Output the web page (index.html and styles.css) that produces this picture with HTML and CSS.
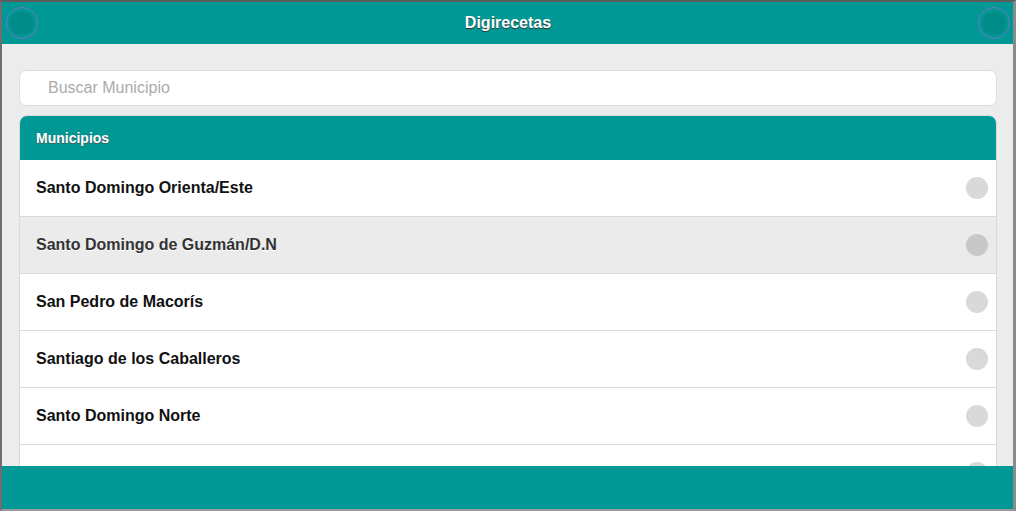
FILE: index.html
```html
<!DOCTYPE html>
<html lang="es">
<head>
    <meta charset="UTF-8">
    <meta name="viewport" content="width=device-width, initial-scale=1.0">
    <title>Digirecetas</title>
    <link rel="stylesheet" href="styles.css">
</head>
<body>
    <div class="app">
        <header class="topbar">
            <span class="round-btn"></span>
            <h1>Digirecetas</h1>
            <span class="round-btn"></span>
        </header>

        <main class="content">
            <div class="search">
                <input type="text" placeholder="Buscar Municipio">
            </div>

            <ul class="listview">
                <li class="list-divider">Municipios</li>
                <li class="list-item">Santo Domingo Orienta/Este<span class="dot"></span></li>
                <li class="list-item active">Santo Domingo de Guzmán/D.N<span class="dot"></span></li>
                <li class="list-item">San Pedro de Macorís<span class="dot"></span></li>
                <li class="list-item">Santiago de los Caballeros<span class="dot"></span></li>
                <li class="list-item">Santo Domingo Norte<span class="dot"></span></li>
                <li class="list-item"><span></span><span class="dot"></span></li>
            </ul>
        </main>

        <footer class="bottombar"></footer>
    </div>
</body>
</html>
```

FILE: styles.css
```css
* {
    margin: 0;
    padding: 0;
    box-sizing: border-box;
}
html, body {
    height: 100%;
}
body {
    font-family: "Liberation Sans", Arial, sans-serif;
    background: #7a7a7a;
    overflow: hidden;
}
.app {
    height: 100%;
    display: flex;
    flex-direction: column;
    border-top: 2px solid #5c5c5c;
    border-left: 2px solid #6e6e6e;
    border-right: 3px solid #8a8a8a;
    border-bottom: 2px solid #9a9a9a;
    background: #ececec;
}
.topbar {
    height: 42px;
    flex-shrink: 0;
    background: #009894;
    display: flex;
    align-items: center;
    justify-content: space-between;
    padding: 0 3px 0 4px;
}
.topbar h1 {
    color: #fff;
    font-size: 16px;
    font-weight: bold;
    text-shadow: 0 1px 1px #333;
}
.round-btn {
    width: 32px;
    height: 32px;
    border-radius: 50%;
    border: 1px solid #6f79c4;
    background: #008c88;
    box-shadow: inset 0 0 0 3px #009894;
}
.content {
    flex: 1;
    overflow: hidden;
    padding: 26px 16px 0 17px;
}
.search {
    background: #fff;
    border: 1px solid #dcdcdc;
    border-radius: 8px;
    height: 36px;
    display: flex;
    align-items: center;
    padding-left: 28px;
}
.search input {
    border: none;
    outline: none;
    background: transparent;
    font-family: "Liberation Sans", Arial, sans-serif;
    font-size: 16px;
    width: 100%;
}
.search input::placeholder {
    color: #ababab;
}
.listview {
    list-style: none;
    margin-top: 9px;
    border: 1px solid #dadada;
    border-radius: 8px 8px 0 0;
    overflow: hidden;
    background: #fff;
}
.list-divider {
    background: #009894;
    color: #fff;
    font-size: 14px;
    font-weight: bold;
    text-shadow: 0 1px 1px #555;
    height: 44px;
    display: flex;
    align-items: center;
    padding-left: 16px;
}
.list-item {
    height: 57px;
    display: flex;
    align-items: center;
    justify-content: space-between;
    padding: 0 8px 0 16px;
    font-size: 16px;
    font-weight: bold;
    color: #111;
    text-shadow: 0 1px 0 #fff;
    border-bottom: 1px solid #dadada;
}
.list-item.active {
    background: #ebebeb;
    color: #333;
}
.dot {
    width: 22px;
    height: 22px;
    border-radius: 50%;
    background: #d9d9d9;
}
.list-item.active .dot {
    background: #c8c8c8;
}
.bottombar {
    height: 43px;
    flex-shrink: 0;
    background: #009894;
}
```
